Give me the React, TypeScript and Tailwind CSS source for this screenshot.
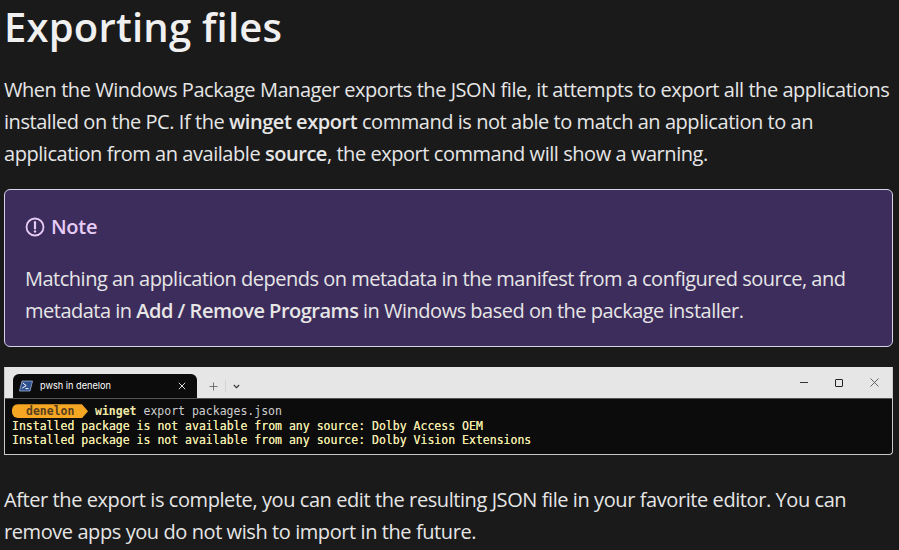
import React from 'react';

const FONT = "font-['Open_Sans','Noto_Sans',sans-serif]";

const TerminalLine: React.FC<{ children: React.ReactNode }> = ({ children }) => (
    <div className="h-[14.7px] leading-[14.7px] whitespace-pre text-[#f0e9a8] [text-shadow:0_0_0.6px_#f0e9a8]">{children}</div>
);

const App: React.FC = () => (
    <div className={`w-[899px] h-[550px] overflow-hidden bg-[#1a1a1a] text-[#e6e6e6] pl-1 pr-1.5 ${FONT}`}>
        <h1 className="text-[40px] leading-[54px] font-semibold tracking-[0.2px] text-[#f0f0f0] h-[58px]">Exporting files</h1>

        <p className="mt-4 text-[20px] leading-8 tracking-[-0.45px]">
            When the Windows Package Manager exports the JSON file, it attempts to export all the applications installed on the PC. If the <strong className="font-semibold">winget export</strong> command is not able to match an application to an application from an available <strong className="font-semibold">source</strong>, the export command will show a warning.
        </p>

        <div className="mt-[19px] h-[158px] rounded-md border border-[#d9d2e9] bg-[#3d2d5c] px-5 pt-[21px]">
            <div className="flex items-center gap-[6px] h-8 text-[#e6ccf5] text-[20px] font-semibold tracking-[-0.3px]">
                <svg className="w-5 h-5" viewBox="0 0 20 20" fill="none" stroke="currentColor">
                    <circle cx="10" cy="10" r="8.5" strokeWidth="1.8" />
                    <path d="M10 5.2v6.2" strokeWidth="2.2" strokeLinecap="round" />
                    <circle cx="10" cy="14.5" r="1.2" fill="currentColor" stroke="none" />
                </svg>
                Note
            </div>
            <p className="mt-[20px] text-[20px] leading-8 tracking-[-0.5px]">
                Matching an application depends on metadata in the manifest from a configured source, and metadata in <strong className="font-semibold">Add / Remove Programs</strong> in Windows based on the package installer.
            </p>
        </div>

        <div className="mt-5 h-[88px] rounded-br-sm border border-t-0 border-[#c9c9c9] bg-[#0c0c0c] overflow-hidden">
            <div className="h-[32px] bg-[#e6e6e6] border-b border-[#555] flex items-end pl-2 font-['Inter','Open_Sans',sans-serif]">
                <div className="w-[184px] h-[24px] bg-[#0c0c0c] rounded-t-md flex items-center pl-[6px] pr-[11px] text-white text-[9.2px]">
                    <svg className="w-[14px] h-[12px] mr-[7px] shrink-0" viewBox="0 0 14 12">
                        <path d="M3 1h10.5L11 11H.5z" fill="#2c4f8f" stroke="#b6c7e6" strokeWidth="0.7" />
                        <path d="M3.8 3l3.4 2.6-4 2.6M6.5 8.6h3" fill="none" stroke="#fff" strokeWidth="1" />
                    </svg>
                    <span className="flex-1">pwsh in denelon</span>
                    <svg className="w-2 h-2" viewBox="0 0 8 8" stroke="#ddd" strokeWidth="1"><path d="M.8.8l6.4 6.4M7.2.8L.8 7.2" /></svg>
                </div>
                <div className="h-[24px] flex items-center pl-[12px]">
                    <svg className="w-[9px] h-[9px]" viewBox="0 0 9 9" stroke="#666" strokeWidth="0.9"><path d="M4.5.5v8M.5 4.5h8" /></svg>
                    <div className="w-px h-3 bg-[#d4d4d4] mx-[7px]" />
                    <svg className="w-[7px] h-[5px]" viewBox="0 0 7 5" fill="none" stroke="#333" strokeWidth="1.1"><path d="M.8 1l2.7 2.7L6.2 1" /></svg>
                </div>
                <div className="flex-1" />
                <div className="h-full flex items-center gap-[27px] pr-[13px]">
                    <div className="w-2 h-px bg-[#333]" />
                    <div className="w-2 h-2 border border-[#222] rounded-[1px]" />
                    <svg className="w-[9px] h-[9px]" viewBox="0 0 9 9" stroke="#555" strokeWidth="0.9"><path d="M.5.5l8 8M8.5.5l-8 8" /></svg>
                </div>
            </div>
            <div className="pl-[7px] pt-[5px] font-['DejaVu_Sans_Mono','Liberation_Mono',monospace] text-[11.5px]">
                <div className="h-[14.7px] leading-[14.7px] flex items-center whitespace-pre">
                    <span className="h-[14px] w-[76px] bg-[#f5a623] text-[#5a3f1e] font-bold rounded-l-md pl-[14px] leading-[14px] [clip-path:polygon(0_0,92%_0,100%_50%,92%_100%,0_100%)]">denelon</span>
                    <span className="ml-[7px] text-[#f0e9a8] font-bold">winget</span>
                    <span className="text-[#cfcfcf]"> export packages.json</span>
                </div>
                <TerminalLine>Installed package is not available from any source: Dolby Access OEM</TerminalLine>
                <TerminalLine>Installed package is not available from any source: Dolby Vision Extensions</TerminalLine>
            </div>
        </div>

        <p className="mt-[29px] text-[20px] leading-8 tracking-[-0.42px]">
            After the export is complete, you can edit the resulting JSON file in your favorite editor. You can remove apps you do not wish to import in the future.
        </p>
    </div>
);

export default App;
